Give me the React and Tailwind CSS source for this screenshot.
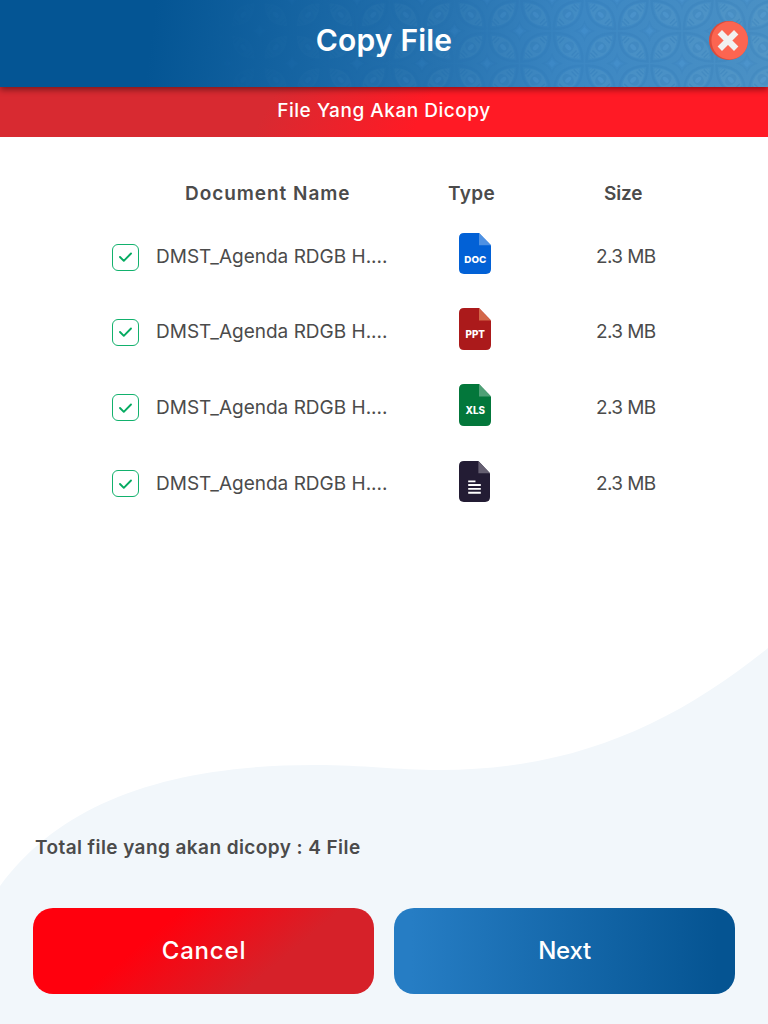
const INK = 'text-[#4b4b4b]';

const FILES = [
  { kind: 'DOC', fill: '#0261d6', fold: '#4e91e3', h: 'h-[75px]', w: 32, tall: 41, lift: '-mt-2' },
  { kind: 'PPT', fill: '#ab1a1b', fold: '#d36749', h: 'h-[75px]', w: 32, tall: 42, lift: '-mt-2' },
  { kind: 'XLS', fill: '#03773b', fold: '#4fa076', h: 'h-[76px]', w: 32, tall: 42, lift: '-mt-1.5' },
  { kind: 'TXT', fill: '#231c34', fold: '#655f71', h: 'h-[76px]', w: 31, tall: 41, lift: '-mt-1.5' },
];

function Batik() {
  return (
    <svg className="absolute inset-0 h-full w-full" aria-hidden="true">
      <defs>
        <g id="petal" fill="none">
          <path d="M2 2C2 17 7 30 30.500 30.500C30.500 15 25 2 2 2Z" stroke="#1c62a4" strokeWidth="2.500" strokeOpacity=".55" />
          <path d="M5 5C5 17 10 27.500 27.500 27.500C27.500 15 22 5 5 5Z" fill="#8fc6d8" fillOpacity=".5" />
          <path d="M7 7L11 11M21.500 21.500L26 26" stroke="#1c62a4" strokeWidth="7" strokeDasharray="1.500 1.500" strokeOpacity=".6" />
          <ellipse cx="16.2" cy="16.2" rx="6.500" ry="5" transform="rotate(-45 16.2 16.2)" fill="#1c62a4" fillOpacity=".45" />
          <ellipse cx="16.2" cy="16.2" rx="3.500" ry="2.200" transform="rotate(45 16.2 16.2)" fill="#7dbdf0" fillOpacity=".8" />
        </g>
        <path id="gem" d="M0 -7Q2 -2 7 0Q2 2 0 7Q-2 2 -7 0Q-2 -2 0 -7Z" fill="#5fb0f5" fillOpacity=".7" stroke="#1c62a4" strokeOpacity=".4" strokeWidth="3" />
        <pattern id="batik" width="65" height="65" x="552" y="31" patternUnits="userSpaceOnUse">
          <use href="#petal" />
          <use href="#petal" transform="translate(65 0) scale(-1 1)" />
          <use href="#petal" transform="translate(0 65) scale(1 -1)" />
          <use href="#petal" transform="translate(65 65) scale(-1 -1)" />
          <use href="#gem" x="32.500" y="0" />
          <use href="#gem" x="32.500" y="65" />
          <use href="#gem" x="0" y="32.500" />
          <use href="#gem" x="65" y="32.500" />
        </pattern>
        <linearGradient id="fade">
          <stop offset=".25" stopColor="#fff" stopOpacity="0" />
          <stop offset=".8" stopColor="#fff" />
        </linearGradient>
        <mask id="fadeMask"><rect width="768" height="88" fill="url(#fade)" /></mask>
      </defs>
      <rect width="768" height="88" fill="url(#batik)" mask="url(#fadeMask)" opacity=".2" />
    </svg>
  );
}

function FileIcon({ kind, fill, fold, w, tall }) {
  return (
    <svg width={w} height={tall} viewBox="0 0 32 42" preserveAspectRatio="none">
      <path d="M5 0H20L32 12.500V37Q32 42 27 42H5Q0 42 0 37V5Q0 0 5 0Z" fill={fill} />
      <path d="M20 0L32 12.500H20Z" fill={fold} />
      {kind === 'TXT' ? (
        <path d="M9.500 20.800H17M9.500 24.600H22.500M9.500 28.600H22.500M9.500 32.500H22.500" stroke="#fff" strokeWidth="1.900" />
      ) : (
        <text x="16.300" y="30.300" textAnchor="middle" fill="#fff" fontFamily="Inter, sans-serif" fontWeight="800" fontSize="9.800">{kind}</text>
      )}
    </svg>
  );
}

export default function App() {
  return (
    <div className={`relative isolate flex h-[1024px] w-[768px] flex-col overflow-hidden bg-white font-[Inter,sans-serif] ${INK}`}>
      <svg className="absolute inset-0 -z-10" width="768" height="1024" aria-hidden="true">
        <path d="M0 886C60 804 165 765 315 765C365 765 395 770 440 770C575 770 675 723 768 648V1024H0Z" fill="#f2f7fb" />
      </svg>
      <header className="relative z-10 flex h-[87px] shrink-0 items-center justify-center bg-[linear-gradient(97deg,#045594_20%,#2672af_57%,#3c87c3_75%,#4b91c5_100%)] pb-1.5 shadow-[0_3px_6px_rgba(0,0,0,.4)]">
        <Batik />
        <h1 className="relative text-[30px] font-semibold tracking-[0.2px] text-white">Copy File</h1>
        <button aria-label="Close" className="absolute top-[21px] right-[20px]">
          <svg className="block" width="39" height="39" viewBox="0 0 39 39">
            <circle cx="19.500" cy="19.500" r="19.500" fill="#db4b3b" />
            <ellipse cx="20.700" cy="19.500" rx="18.300" ry="19" fill="#fc6551" />
            <path d="M10.800 11.300L27.200 27.700M27.200 11.300L10.800 27.700" stroke="#f1f1f1" strokeWidth="6.200" />
          </svg>
        </button>
      </header>
      <div className="flex h-[50px] shrink-0 items-center justify-center bg-[linear-gradient(118deg,#d82a31_35%,#ff1a25_55%)] pb-0.5 text-[19px] font-medium tracking-[0.53px] text-white">File Yang Akan Dicopy</div>
      <main className="flex flex-1 flex-col">
        <div className="mt-[41px] flex h-8 items-center text-[19px] font-semibold">
          <span className="ml-[185px] w-[263px] tracking-[0.95px]">Document Name</span>
          <span className="w-[156px] tracking-[0.4px]">Type</span>
          <span className="tracking-[-0.2px]">Size</span>
        </div>
        <div className="mt-[10px]">
          {FILES.map((f) => (
            <div key={f.kind} className={`flex items-center text-[19px] ${f.h}`}>
              <span className="-mt-px ml-[112px] flex size-[27px] items-center justify-center rounded-md border border-[#12b16d] bg-white">
                <svg width="15" height="12" viewBox="0 0 15 12" fill="none" stroke="#05ab61" strokeWidth="1.900" strokeLinecap="round" strokeLinejoin="round"><path d="M2 6L5.800 9.800L13 2.500" /></svg>
              </span>
              <span className="ml-[17px] w-[303px] whitespace-nowrap">DMST_Agenda RDGB H....</span>
              <span className={`w-[137px] ${f.lift}`}><FileIcon {...f} /></span>
              <span className="tracking-[-0.6px]">2.3 MB</span>
            </div>
          ))}
        </div>
      </main>
      <p className="mb-[45px] ml-[35px] text-[19px] leading-[30px] font-semibold tracking-[0.42px]">Total file yang akan dicopy : 4 File</p>
      <footer className="mb-[30px] flex gap-5 px-[33px] text-2xl font-medium text-white">
        <button className="h-[86px] w-[341px] rounded-[20px] bg-[linear-gradient(140deg,#ff000d_34%,#d62129_70%)] pl-px tracking-[0.8px]">Cancel</button>
        <button className="h-[86px] w-[341px] rounded-[20px] bg-[linear-gradient(90deg,#267dc4_5%,#055492_95%)] tracking-[-0.3px]">Next</button>
      </footer>
    </div>
  );
}
